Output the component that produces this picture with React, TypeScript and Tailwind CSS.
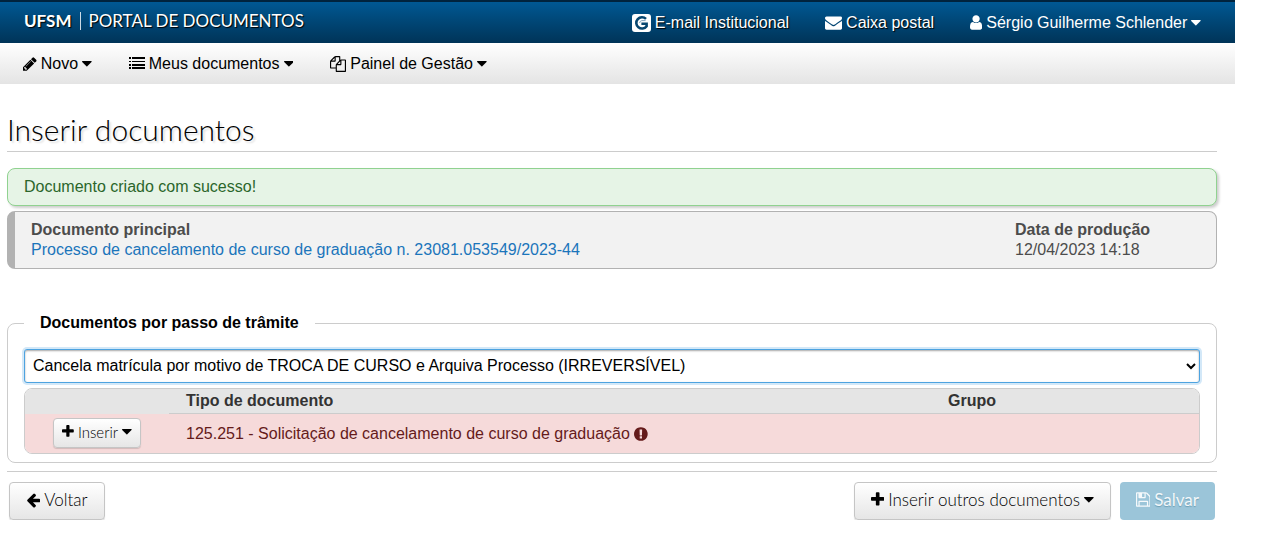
import type { ReactNode } from "react";

type IconProps = {
	className?: string;
};

type GlyphProps = IconProps & {
	viewBox: string;
	d: string;
};

function Glyph({ viewBox, d, className = "h-[17px]" }: GlyphProps) {
	return (
		<svg viewBox={viewBox} className={`${className} w-auto shrink-0`} fill="currentColor" aria-hidden="true">
			<path d={d} />
		</svg>
	);
}

function IconPencil() {
	return (
		<Glyph
			viewBox="128 0 1536 1792"
			className="h-4"
			d="M491 1536l91-91-235-235-91 91v107h128v128h107zm523-928q0-22-22-22-10 0-17 7l-542 542q-7 7-7 17 0 22 22 22 10 0 17-7l542-542q7-7 7-17zm-54-192l416 416-832 832h-416v-416zm683 96q0 53-37 90l-166 166-416-416 166-165q36-38 90-38 53 0 91 38l235 234q37 39 37 91z"
		/>
	);
}

function IconList() {
	return (
		<svg viewBox="0 0 16 16" className="h-4 w-4 shrink-0" fill="currentColor" shapeRendering="crispEdges" aria-hidden="true">
			<path d="M0 1h2v2H0zM3 1h13v2H3zM0 5h2v1H0zM3 5h13v1H3zM0 8h2v2H0zM3 8h13v2H3zM0 11h2v2H0zM3 11h13v2H3z" />
		</svg>
	);
}

function IconFiles() {
	return (
		<Glyph
			viewBox="0 0 1792 1792"
			className="h-4"
			d="M1696 384q40 0 68 28t28 68v1216q0 40-28 68t-68 28h-960q-40 0-68-28t-28-68v-288h-544q-40 0-68-28t-28-68v-672q0-40 20-88t48-76l408-408q28-28 76-48t88-20h416q40 0 68 28t28 68v328q68-40 128-40h416zm-544 213l-299 299h299v-299zm-640-384l-299 299h299v-299zm196 647l316-316v-416h-384v416q0 40-28 68t-68 28h-416v640h512v-256q0-40 20-88t48-76zm956 804v-1152h-384v416q0 40-28 68t-68 28h-416v640h896z"
		/>
	);
}

function IconEnvelope() {
	return (
		<Glyph
			viewBox="0 0 1792 1792"
			d="M1792 710v794q0 66-47 113t-113 47h-1472q-66 0-113-47t-47-113v-794q44 49 101 87 362 246 497 345 57 42 92.5 65.5t94.5 48 110 24.5h2q51 0 110-24.5t94.5-48 92.5-65.5q170-123 498-345 57-39 100-87zm0-294q0 79-49 151t-122 123q-376 261-468 325-10 7-42.5 31t-54 38.5-52 32.5-57.5 27-50 9h-2q-23 0-50-9t-57.5-27-52-32.5-54-38.5-42.5-31q-91-64-262-182.5t-205-142.5q-62-42-117-115.5t-55-136.5q0-78 41.5-130t118.5-52h1472q65 0 112.5 47t47.5 113z"
		/>
	);
}

function IconUser() {
	return (
		<Glyph
			viewBox="256 0 1280 1792"
			d="M1536 1399q0 109-62.5 187t-150.5 78h-854q-88 0-150.5-78t-62.5-187q0-85 8.5-160.5t31.5-152 58.5-131 94-89 134.5-34.5q131 128 313 128t313-128q76 0 134.5 34.5t94 89 58.5 131 31.5 152 8.5 160.5zm-256-887q0 159-112.5 271.5t-271.5 112.5-271.5-112.5-112.5-271.5 112.5-271.5 271.5-112.5 271.5 112.5 112.5 271.5z"
		/>
	);
}

function IconPlus({ className }: IconProps) {
	return (
		<Glyph
			viewBox="192 0 1408 1792"
			className={className}
			d="M1600 736v192q0 40-28 68t-68 28h-416v416q0 40-28 68t-68 28h-192q-40 0-68-28t-28-68v-416h-416q-40 0-68-28t-28-68v-192q0-40 28-68t68-28h416v-416q0-40 28-68t68-28h192q40 0 68 28t28 68v416h416q40 0 68 28t28 68z"
		/>
	);
}

function IconArrowLeft() {
	return (
		<Glyph
			viewBox="64 0 1600 1792"
			className="h-4"
			d="M1664 896v128q0 53-32.5 90.5t-84.5 37.5h-704l293 294q38 36 38 90t-38 90l-75 76q-37 37-90 37-52 0-91-37l-651-652q-37-37-37-90 0-52 37-91l651-650q38-38 91-38 52 0 90 38l75 74q38 38 38 91t-38 91l-293 293h704q52 0 84.5 37.5t32.5 90.5z"
		/>
	);
}

function IconSave() {
	return (
		<Glyph
			viewBox="128 0 1536 1792"
			d="M512 1536h768v-384h-768v384zm896 0h128v-896q0-14-10-38.5t-20-34.5l-281-281q-10-10-34-20t-39-10v416q0 40-28 68t-68 28h-576q-40 0-68-28t-28-68v-416h-128v1280h128v-416q0-40 28-68t68-28h832q40 0 68 28t28 68v416zm-384-928v-320q0-13-9.5-22.5t-22.5-9.5h-192q-13 0-22.5 9.5t-9.5 22.5v320q0 13 9.5 22.5t22.5 9.5h192q13 0 22.5-9.5t9.5-22.5zm640 32v928q0 40-28 68t-68 28h-1344q-40 0-68-28t-28-68v-1344q0-40 28-68t68-28h928q40 0 88 20t76 48l280 280q28 28 48 76t20 88z"
		/>
	);
}

function IconAlert() {
	return (
		<Glyph
			viewBox="128 0 1536 1792"
			className="h-4"
			d="M896 128q209 0 385.5 103t279.5 279.5 103 385.5-103 385.5-279.5 279.5-385.5 103-385.5-103-279.5-279.5-103-385.5 103-385.5 279.5-279.5 385.5-103zm128 1247v-190q0-14-9-23.5t-22-9.5h-192q-13 0-23 10t-10 23v190q0 13 10 23t23 10h192q13 0 22-9.5t9-23.5zm-2-344l18-621q0-12-10-18-10-8-24-8h-220q-14 0-24 8-10 6-10 18l17 621q0 10 10 17.5t24 7.5h185q14 0 23.5-7.5t10.5-17.5z"
		/>
	);
}

function IconCaret() {
	return (
		<Glyph
			viewBox="384 0 1024 1792"
			d="M1408 704q0 26-19 45l-448 448q-19 19-45 19t-45-19l-448-448q-19-19-19-45t19-45 45-19h896q26 0 45 19t19 45z"
		/>
	);
}

// White badge with the ring-shaped G used by the institutional e-mail
function IconMailBadge() {
	return (
		<svg viewBox="0 0 19 18" className="h-[18px] w-[19px] shrink-0" fill="none" aria-hidden="true">
			<rect width="19" height="18" rx="3" fill="#fff" />
			<path d="M14 4.9A5.7 5.6 0 1 0 14.6 12.2V9.8H9.4" stroke="#07466f" strokeWidth="2.6" />
			<path d="M13.6 6.6H9.8A2.8 2.6 0 0 0 7.6 9" stroke="#7fa3bd" strokeWidth="1" />
		</svg>
	);
}

function NavLink({ icon, children }: { icon: ReactNode; children: ReactNode }) {
	return (
		<a href="#" className="flex items-center gap-1">
			{icon}
			{children}
		</a>
	);
}

function NavMenu({ icon, children }: { icon: ReactNode; children: ReactNode }) {
	return (
		<button type="button" className="flex items-center gap-1">
			{icon}
			{children}
			<IconCaret />
		</button>
	);
}

const buttonClass =
	"flex items-center gap-1 rounded-[4px] border border-[#c5c5c5] bg-linear-to-b from-white to-[#e6e6e6] pb-[3px] font-['Lato',sans-serif] font-light text-black shadow-[0_1px_1px_rgba(0,0,0,0.15)]";

export default function App() {
	return (
		<div className="mr-[37px] font-['Liberation_Sans',Arial,sans-serif] text-base leading-5 text-black">
			<header className="flex h-[43px] items-center justify-between border-t-2 border-[#00233d] bg-linear-to-b from-[#005893] to-[#003458] pr-[34px] pl-6 text-white [text-shadow:1px_1px_1px_#000]">
				<a href="#" className="flex items-center gap-2 pb-[3px] font-['Lato',sans-serif] text-[17px]">
					<strong className="font-bold">UFSM</strong>
					<span className="h-[18px] border-l border-white/80" />
					<span>PORTAL DE DOCUMENTOS</span>
				</a>
				<nav className="flex items-center gap-9">
					<NavLink icon={<IconMailBadge />}>E-mail Institucional</NavLink>
					<NavLink icon={<IconEnvelope />}>Caixa postal</NavLink>
					<NavMenu icon={<IconUser />}>Sérgio Guilherme Schlender</NavMenu>
				</nav>
			</header>

			<nav className="flex h-[41px] items-center gap-[37px] bg-linear-to-b from-white to-[#e4e4e4] px-[23px]">
				<NavMenu icon={<IconPencil />}>Novo</NavMenu>
				<NavMenu icon={<IconList />}>Meus documentos</NavMenu>
				<NavMenu icon={<IconFiles />}>Painel de Gestão</NavMenu>
			</nav>

			<main className="pt-[26px] pr-[18px] pl-[7px]">
				<h1 className="border-b border-[#ccc] pb-[2px] font-['Lato',sans-serif] text-[30px] leading-[39px] font-light [text-shadow:2px_2px_2px_#ddd]">
					Inserir documentos
				</h1>

				<p role="status" className="mt-4 rounded-[8px] border border-[#90d290] bg-[#e6f4e6] px-4 py-2 text-[#2b662b] shadow-[2px_2px_3px_rgba(0,0,0,0.2)]">
					Documento criado com sucesso!
				</p>

				<section className="mt-[5px] grid grid-cols-[1fr_185px] rounded-[8px] border border-l-8 border-[#b2b2b2] bg-[#f2f2f2] px-4 py-2 text-[#4c4c4c]">
					<div>
						<strong className="block">Documento principal</strong>
						<a href="#" className="text-[#1b75bb]">
							Processo de cancelamento de curso de graduação n. 23081.053549/2023-44
						</a>
					</div>
					<div>
						<strong className="block">Data de produção</strong>
						12/04/2023 14:18
					</div>
				</section>

				<fieldset className="mt-11 rounded-[8px] border border-[#ccc] px-4 pb-2">
					<legend className="px-4 font-bold">Documentos por passo de trâmite</legend>
					<select
						aria-label="Documentos por passo de trâmite"
						className="mt-4 block h-[34px] w-full rounded-[3px] border border-[#4da3e0] bg-white px-1 pb-[2px] text-black shadow-[inset_0_1px_2px_rgba(0,0,0,0.35),0_0_0_2px_#d3e8f8]"
					>
						<option>Cancela matrícula por motivo de TROCA DE CURSO e Arquiva Processo (IRREVERSÍVEL)</option>
					</select>
					<div className="mt-[5px] overflow-hidden rounded-[8px] border border-[#ccc]">
						<table className="w-full table-fixed border-separate border-spacing-0 text-left">
							<thead className="bg-[#e5e5e5] text-[#333]">
								<tr>
									<td className="w-36" />
									<th className="w-[65%] border-b border-[#ccc] px-[17px] pt-[2px] pb-[2px]">Tipo de documento</th>
									<th className="border-b border-[#ccc] px-4 pt-[2px] pb-[2px]">Grupo</th>
								</tr>
							</thead>
							<tbody className="bg-[#f6dada] text-[#651b1b]">
								<tr>
									<td className="pt-1 pb-[5px]">
										<button type="button" className={`${buttonClass} mx-auto h-[30px] px-2 text-[15px]`}>
											<IconPlus className="h-[15px]" />
											Inserir
											<IconCaret />
										</button>
									</td>
									<td className="px-[17px]">
										<span className="flex items-center gap-1">
											125.251 - Solicitação de cancelamento de curso de graduação
											<IconAlert />
										</span>
									</td>
									<td />
								</tr>
							</tbody>
						</table>
					</div>
				</fieldset>

				<footer className="mt-2 flex items-center gap-[9px] border-t border-[#ccc] px-[2px] pt-[10px]">
					<button type="button" className={`${buttonClass} mr-auto h-[38px] px-4 text-[17px]`}>
						<IconArrowLeft />
						Voltar
					</button>
					<button type="button" className={`${buttonClass} h-[38px] px-4 text-[17px]`}>
						<IconPlus />
						Inserir outros documentos
						<IconCaret />
					</button>
					<button
						type="button"
						disabled
						className="flex h-[38px] items-center gap-1 rounded-[4px] bg-[#9bc5d9] px-4 pb-[3px] font-['Lato',sans-serif] text-[17px] text-white/90 [text-shadow:0_1px_1px_#6d9db3]"
					>
						<IconSave />
						Salvar
					</button>
				</footer>
			</main>
		</div>
	);
}
